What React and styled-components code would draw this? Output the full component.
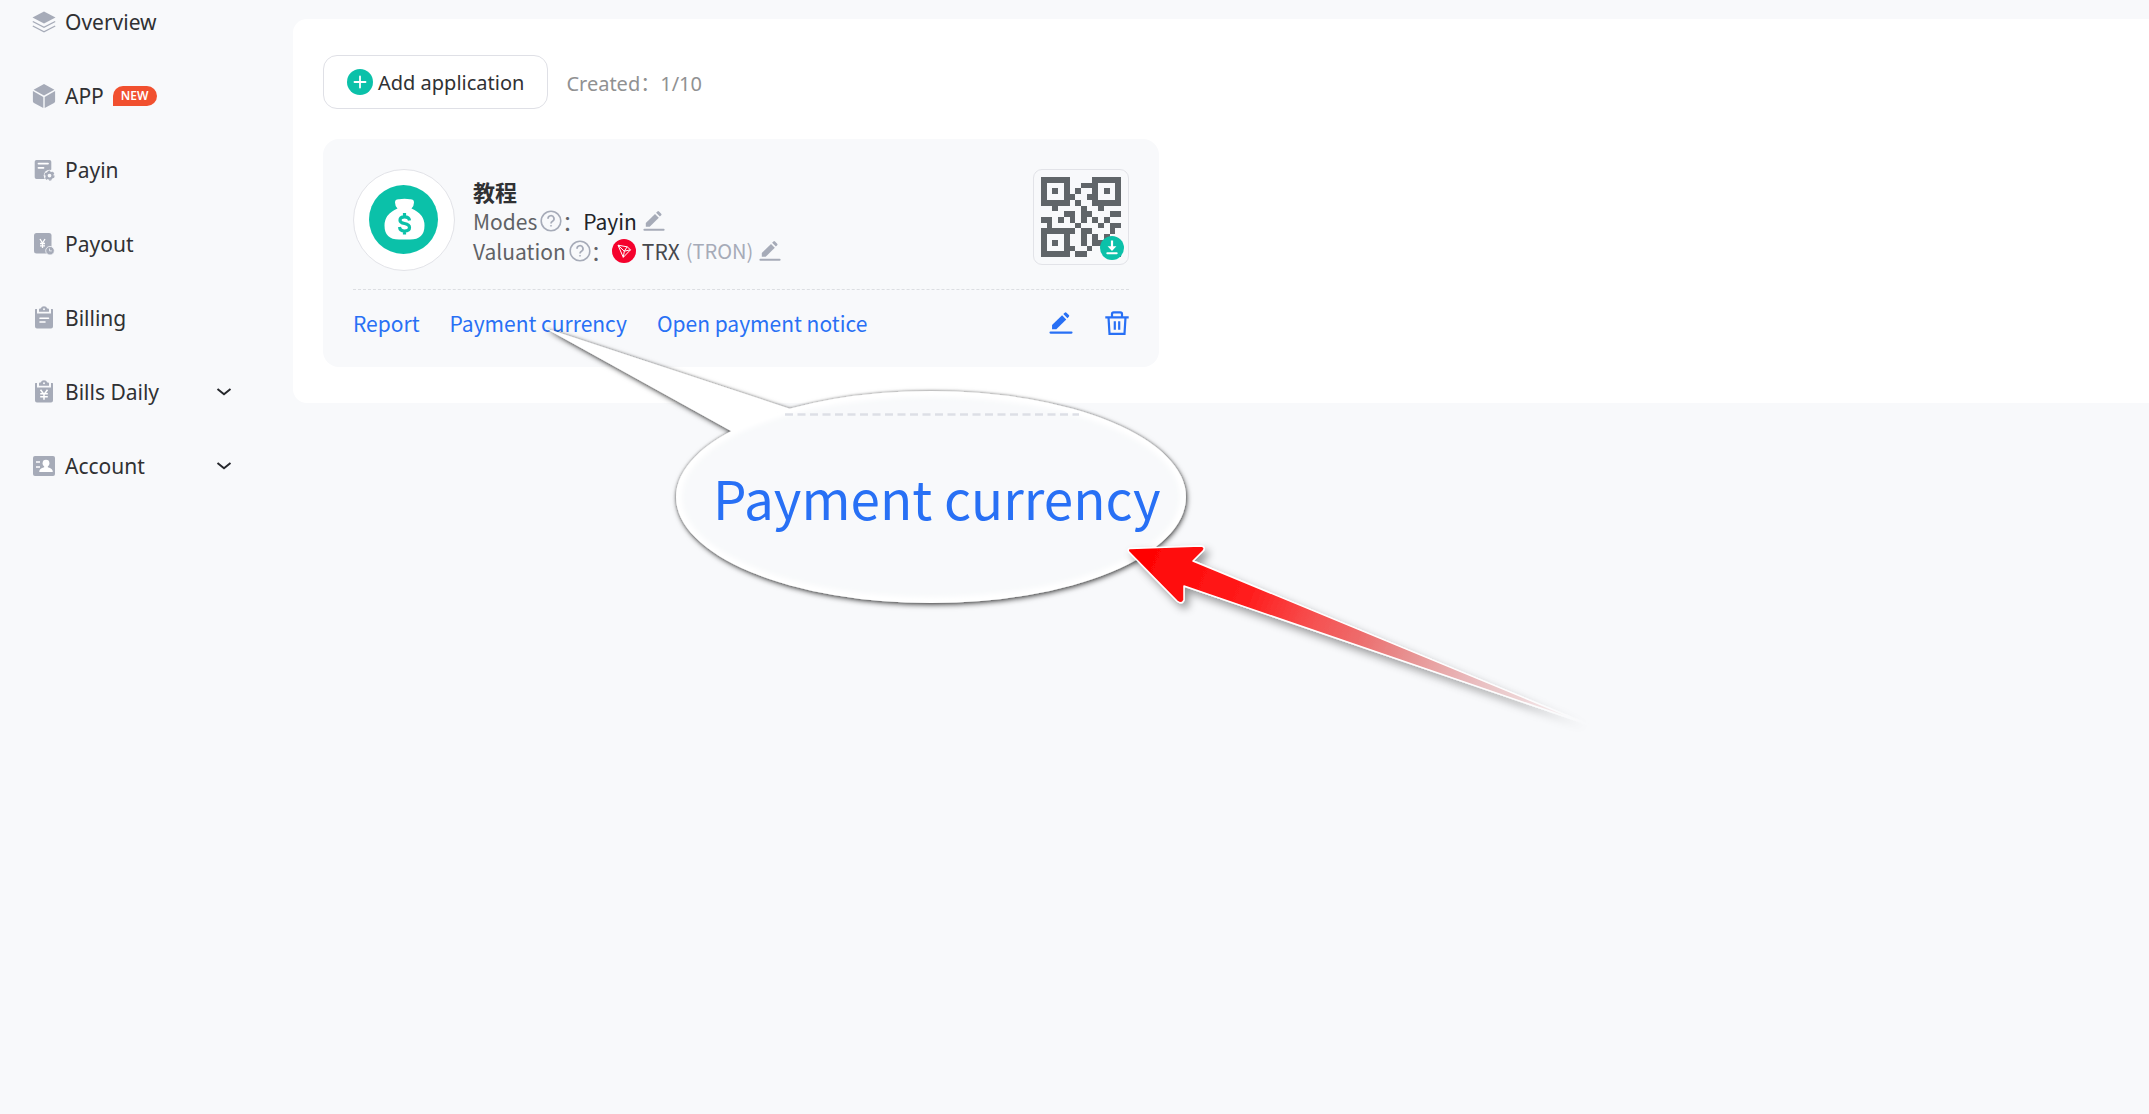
import React from "react";
import styled, { createGlobalStyle } from "styled-components";

const GlobalStyle = createGlobalStyle`
  * {
    box-sizing: border-box;
  }
  body {
    margin: 0;
    background-color: #f8f9fb;
    font-family: "Noto Sans", "Noto Sans CJK SC", sans-serif;
    font-size: 21px;
    color: #303133;
  }
  button {
    font: inherit;
    color: inherit;
    background: none;
    border: 0;
    padding: 0;
    cursor: pointer;
  }
  a {
    color: inherit;
    text-decoration: none;
  }
  svg {
    display: block;
    flex: none;
  }
`;

const LayersIcon = () => (
  <svg width="24" height="24" viewBox="0 0 24 24" fill="#a6abb8">
    <path d="M12 1.5 23.5 7.5 12 13.5.5 7.5z" />
    <path
      d="M.8 11.5 12 17.3l11.2-5.8M.8 16 12 21.8 23.2 16"
      fill="none"
      stroke="#a6abb8"
      strokeWidth="1.4"
    />
  </svg>
);

const CubeIcon = () => (
  <svg width="24" height="24" viewBox="0 0 24 24" fill="#a6abb8">
    <path d="M12 0 22.4 5.8 12 11.6 1.6 5.8z" />
    <path d="M.9 7.1 11.3 12.9V24L2 18.9Q.9 18.3.9 17.2z" />
    <path d="M23.1 7.1 12.7 12.9V24L22 18.9Q23.1 18.3 23.1 17.2z" />
  </svg>
);

const PayinIcon = () => (
  <svg width="24" height="24" viewBox="0 0 24 24">
    <path
      d="M4.5 2h13A1.8 1.8 0 0 1 19.3 3.8V11.5L13.5 16V21H4.5A1.8 1.8 0 0 1 2.7 19.2V3.8A1.8 1.8 0 0 1 4.5 2z"
      fill="#a6abb8"
    />
    <path d="M6.5 5.6h9.5M6.5 9.8h5" stroke="#fff" strokeWidth="1.8" strokeLinecap="round" />
    <circle cx="17.5" cy="17.6" r="5.8" fill="#f8f9fb" />
    <circle cx="17.5" cy="17.6" r="3" fill="none" stroke="#a6abb8" strokeWidth="2.2" />
    <circle
      cx="17.5"
      cy="17.6"
      r="4.4"
      fill="none"
      stroke="#a6abb8"
      strokeWidth="1.4"
      strokeDasharray="2.4 2.208"
    />
  </svg>
);

const PayoutIcon = () => (
  <svg width="24" height="24" viewBox="0 0 24 24">
    <rect x="2" y="1" width="17.5" height="20.5" rx="2.5" fill="#a6abb8" />
    <path
      d="M8 7l2.500 4L13 7M10.500 11v5M8 11.500h5M8 13.800h5"
      fill="none"
      stroke="#fff"
      strokeWidth="1.3"
    />
    <circle cx="18" cy="18.7" r="4.3" fill="#a6abb8" stroke="#f8f9fb" strokeWidth=".8" />
    <path d="M17.5 16.5v2.4h2.3" fill="none" stroke="#e4e7ed" strokeWidth="1" />
  </svg>
);

const ClipboardIcon = ({ yen }) => (
  <svg width="24" height="24" viewBox="0 0 24 24">
    <path
      d="M5 3v4.5h14V3h1.5Q21 3 21 3.8V20.5Q21 22.500 19 22.500H5Q3 22.500 3 20.500V3.800Q3 3 3.500 3z"
      fill="#a6abb8"
    />
    <path
      d="M7 5.8V3.5Q7 2.8 8 2.6H8.7Q9.5.3 12 .3T15.3 2.6H16Q17 2.8 17 3.5V5.8z"
      fill="#a6abb8"
    />
    <circle cx="12" cy="3.2" r="1" fill="#f8f9fb" />
    {yen ? (
      <path
        d="M8.500 9.800 12 14.500l3.500-4.700M12 14.500v5.300M8.200 13.800h7.600M8.200 16.800h7.600"
        fill="none"
        stroke="#fff"
        strokeWidth="1.5"
      />
    ) : (
      <path d="M8 12.2h8.500M8 16h5" stroke="#fff" strokeWidth="1.6" strokeLinecap="round" />
    )}
  </svg>
);

const AccountIcon = () => (
  <svg width="24" height="24" viewBox="0 0 24 24">
    <rect x="1" y="2" width="22" height="20" rx="2" fill="#a6abb8" />
    <path d="M4 8h4M4 13h4" stroke="#fff" strokeWidth="1.5" />
    <circle cx="14" cy="9.2" r="3.4" fill="#fff" />
    <path d="M12.2 11h3.6v2.3q5 .9 5 4.7H7.2q0-3.800 5-4.700z" fill="#fff" />
  </svg>
);

const ChevronIcon = () => (
  <svg width="16" height="16" viewBox="0 0 16 16">
    <path d="M1.5 5 8 10.2 14.5 5" fill="none" stroke="#26282c" strokeWidth="2" />
  </svg>
);

const PlusIcon = () => (
  <svg width="26" height="26" viewBox="0 0 26 26">
    <circle cx="13" cy="13" r="13" fill="#0bc1a9" />
    <path d="M13 7.5v11M7.5 13h11" stroke="#fff" strokeWidth="1.8" strokeLinecap="round" />
  </svg>
);

const MoneyBag = () => (
  <svg width="70" height="70" viewBox="0 0 70 70">
    <circle cx="34.5" cy="34.5" r="34.500" fill="#0bc1a9" />
    <path
      d="M28.5 23.5Q26 21 26 17.5Q26 14 30 14.2Q35.5 13.2 41 14.2Q45 14 45 17.5Q45 21 42.5 23.5Q55.5 29 55.5 40.5Q55.5 54.5 41 54.5H30Q15.5 54.5 15.5 40.5Q15.5 29 28.5 23.5z"
      fill="#fff"
    />
    <path
      d="M40.5 35.5Q40 31.8 35.5 31.8Q31 31.8 31 35.2Q31 37.6 35.5 38.5Q40.5 39.5 40.5 42.5Q40.5 46 35.5 46Q31 46 30.5 42M35.5 28v4M35.5 46v3.5"
      fill="none"
      stroke="#0bc1a9"
      strokeWidth="3.2"
    />
  </svg>
);

const HelpIcon = () => (
  <svg width="22" height="22" viewBox="0 0 22 22" fill="none" stroke="#a6abb8">
    <circle cx="11" cy="11" r="9.8" strokeWidth="1.6" />
    <path d="M8 8.8a3 3 0 1 1 4.500 2.500q-1.500.8-1.500 2.200" strokeWidth="1.7" />
    <circle cx="11" cy="15.8" r=".5" strokeWidth="1" />
  </svg>
);

const PenIcon = ({ color = "#a6abb8", size = 22 }) => (
  <svg width={size} height={size} viewBox="0 0 22 22" fill={color}>
    <path d="M2.800 16.800v-3.900L12 3.900l3.800 3.800-9.100 9.100z" />
    <path d="m13.100 2.800 1.300-1.300q.8-.8 1.600 0l2.200 2.200q.8.800 0 1.600l-1.300 1.300z" />
    <rect x=".4" y="18.8" width="21.2" height="2" rx="1" />
  </svg>
);

const TrashIcon = () => (
  <svg width="24" height="24" viewBox="0 0 24 24" fill="none" stroke="#2870f5" strokeWidth="2.2">
    <path d="M.3 6.300h23.400M3.500 6.300 4.500 22.800h15L20.500 6.300" />
    <path d="M7 6.300V3Q7 1.300 8.700 1.300h6.600Q17 1.300 17 3v3.300M9.800 10.200v8.500M14.200 10.200v8.500" />
  </svg>
);

const TronIcon = () => (
  <svg width="24" height="24" viewBox="0 0 24 24">
    <circle cx="12" cy="12" r="12" fill="#f5022d" />
    <path
      d="M6 6.2 15.2 7.8 18.5 10.8 11.3 18.3zM6 6.2 12.3 12.2 15.2 7.8M12.3 12.2 18.5 10.8M12.3 12.2 11.3 18.3"
      fill="none"
      stroke="#fff"
      strokeWidth="1"
      strokeLinejoin="round"
    />
  </svg>
);

const DownloadIcon = () => (
  <svg width="24" height="24" viewBox="0 0 24 24">
    <circle cx="12" cy="12" r="12" fill="#0bc1a9" />
    <path d="M10.9 4.5h2.2v5.7h3.3L12 15 7.6 10.2h3.3z" fill="#fff" />
    <path d="M7.3 17.3h9.4" stroke="#fff" strokeWidth="2" strokeLinecap="round" />
  </svg>
);

const qrRows = [
  "11111....11111",
  "1...1..111...1",
  "1.1.1.1..1.1.1",
  "1...11..11...1",
  "11111.1..11111",
  "..1....1..1...",
  "....11.11...11",
  "11.1.1.1.1.1..",
  ".1....1...1.11",
  "111111.11...1.",
  "1...1..1.1.1..",
  "1.1.1..1.11...",
  "1...11..1.....",
  "11111.11.....1",
];

const QrCode = () => (
  <svg width="80" height="80" viewBox="0 0 14 14" fill="#606569" shapeRendering="crispEdges">
    {qrRows.map((row, y) =>
      row.split("").map((cell, x) => cell === "1" && <rect key={`${x}-${y}`} x={x} y={y} width="1" height="1" />)
    )}
  </svg>
);

const menu = [
  { label: "Overview", icon: <LayersIcon /> },
  { label: "APP", icon: <CubeIcon />, isNew: true },
  { label: "Payin", icon: <PayinIcon /> },
  { label: "Payout", icon: <PayoutIcon /> },
  { label: "Billing", icon: <ClipboardIcon /> },
  { label: "Bills Daily", icon: <ClipboardIcon yen />, children: true },
  { label: "Account", icon: <AccountIcon />, children: true },
];

function App() {
  return (
    <Page>
      <GlobalStyle />
      <Sidebar>
        {menu.map((item) => (
          <MenuItem
            key={item.label}
            as={item.children ? "button" : "a"}
            href={item.children ? undefined : "#"}
          >
            {item.icon}
            <span>{item.label}</span>
            {item.isNew && <NewTag>NEW</NewTag>}
            {item.children && (
              <Arrow>
                <ChevronIcon />
              </Arrow>
            )}
          </MenuItem>
        ))}
      </Sidebar>
      <Main>
        <Panel>
          <Toolbar>
            <AddButton>
              <PlusIcon />
              Add application
            </AddButton>
            <Created>Created：1/10</Created>
          </Toolbar>
          <Card>
            <CardTop>
              <Avatar>
                <MoneyBag />
              </Avatar>
              <Info>
                <Name>教程</Name>
                <InfoRow>
                  <Label>
                    Modes
                    <HelpIcon />：
                  </Label>
                  <Value>
                    Payin
                    <IconButton aria-label="Edit modes">
                      <PenIcon />
                    </IconButton>
                  </Value>
                </InfoRow>
                <InfoRow>
                  <Label>
                    Valuation
                    <HelpIcon />：
                  </Label>
                  <Value>
                    <TronIcon />
                    <Coin>TRX</Coin>
                    <Chain>(TRON)</Chain>
                    <IconButton aria-label="Edit valuation">
                      <PenIcon />
                    </IconButton>
                  </Value>
                </InfoRow>
              </Info>
              <QrBox>
                <QrCode />
                <Download aria-label="Download code">
                  <DownloadIcon />
                </Download>
              </QrBox>
            </CardTop>
            <CardBottom>
              <CardLink href="#">Report</CardLink>
              <CardLink href="#">Payment currency</CardLink>
              <CardLink href="#">Open payment notice</CardLink>
              <Actions>
                <IconButton aria-label="Edit">
                  <PenIcon color="#2870f5" size={24} />
                </IconButton>
                <IconButton aria-label="Delete">
                  <TrashIcon />
                </IconButton>
              </Actions>
            </CardBottom>
          </Card>
        </Panel>
      </Main>
      <Callout>
        <svg width="1100" height="440" viewBox="530 310 1100 440">
          <defs>
            <filter id="bubbleShadow" x="-10%" y="-10%" width="120%" height="120%">
              <feDropShadow dx="0" dy="0" stdDeviation="1.5" floodColor="#000" floodOpacity=".4" />
              <feDropShadow dx="1" dy="2" stdDeviation="2.5" floodColor="#000" floodOpacity=".6" />
            </filter>
            <filter id="arrowShadow" x="-10%" y="-10%" width="120%" height="130%">
              <feDropShadow dx="4" dy="5" stdDeviation="4" floodColor="#000" floodOpacity=".4" />
            </filter>
            <filter id="soften">
              <feGaussianBlur stdDeviation="2" />
            </filter>
            <linearGradient
              id="arrowFill"
              gradientUnits="userSpaceOnUse"
              x1="1128"
              y1="549"
              x2="1590"
              y2="725"
            >
              <stop offset="0" stopColor="#ff0000" />
              <stop offset=".26" stopColor="#ff1c1c" />
              <stop offset=".4" stopColor="#f65050" />
              <stop offset=".6" stopColor="#e58686" />
              <stop offset=".8" stopColor="#e6bcbe" />
              <stop offset="1" stopColor="#f5dfe2" />
            </linearGradient>
            <linearGradient
              id="fade"
              gradientUnits="userSpaceOnUse"
              x1="1128"
              y1="549"
              x2="1590"
              y2="725"
            >
              <stop offset=".5" stopColor="#fff" />
              <stop offset=".85" stopColor="#fff" stopOpacity=".75" />
              <stop offset="1" stopColor="#fff" stopOpacity="0" />
            </linearGradient>
            <mask id="arrowMask" maskUnits="userSpaceOnUse" x="1100" y="520" width="530" height="230">
              <rect x="1100" y="520" width="530" height="230" fill="url(#fade)" />
            </mask>
            <clipPath id="bubbleClip">
              <ellipse cx="931" cy="497" rx="255" ry="106" />
            </clipPath>
          </defs>
          <g filter="url(#bubbleShadow)">
            <path d="M545 328 789 408.500 860 450 780 480 731 431z" fill="#fff" />
            <ellipse cx="931" cy="497" rx="255" ry="106" fill="#fff" />
          </g>
          <g clipPath="url(#bubbleClip)">
            <ellipse cx="931" cy="497" rx="249" ry="100" fill="#f8f9fb" filter="url(#soften)" />
            <path d="M785 414.500h294" stroke="#dddfe6" strokeWidth="2.5" strokeDasharray="8 4.5" />
          </g>
          <g mask="url(#arrowMask)">
            <path
              d="M1130 548.500 1201 546Q1206 547 1203 551L1193 561 1590 725 1184 586V600Q1182 605 1177 601L1129 552Q1127 549 1130 548.500z"
              fill="url(#arrowFill)"
              stroke="#fff"
              strokeWidth="1.5"
              strokeLinejoin="round"
              filter="url(#arrowShadow)"
            />
          </g>
        </svg>
        <CalloutText>Payment currency</CalloutText>
      </Callout>
    </Page>
  );
}

const Page = styled.div`
  position: relative;
  display: flex;
  min-height: 100vh;
  overflow: hidden;
`;

const Sidebar = styled.nav`
  display: flex;
  flex-direction: column;
  gap: 30px;
  width: 293px;
  flex: none;
  padding: 0 61px 0 32px;
`;

const MenuItem = styled.a`
  display: flex;
  align-items: center;
  gap: 9px;
  height: 44px;
  text-align: left;
`;

const NewTag = styled.span`
  height: 20px;
  padding: 0 8px;
  border-radius: 10px 10px 10px 0;
  background-color: #f1502f;
  color: #fff;
  font-size: 12px;
  font-weight: 600;
  line-height: 20px;
`;

const Arrow = styled.span`
  margin-left: auto;
`;

const Main = styled.main`
  flex: 1;
  min-width: 0;
  padding-top: 19px;
`;

const Panel = styled.section`
  padding: 36px 30px;
  border-radius: 14px 0 0 14px;
  background-color: #fff;
`;

const Toolbar = styled.div`
  display: flex;
  align-items: center;
  gap: 18px;
  margin-bottom: 30px;
`;

const AddButton = styled.button`
  && {
    display: flex;
    align-items: center;
    gap: 5px;
    height: 54px;
    padding: 0 23px;
    border: 1px solid #dfe0e6;
    border-radius: 14px;
    font-size: 20px;
  }
`;

const Created = styled.span`
  color: #909192;
  font-size: 20px;
`;

const Card = styled.article`
  width: 100%;
  max-width: 836px;
  padding: 30px 30px 28px;
  border-radius: 16px;
  background-color: #f8f9fb;
  font-family: "Noto Sans CJK SC", sans-serif;
`;

const CardTop = styled.div`
  display: flex;
  align-items: flex-start;
  padding-bottom: 18px;
  border-bottom: 1px dashed #dcdee2;
`;

const Avatar = styled.div`
  display: flex;
  align-items: center;
  justify-content: center;
  width: 102px;
  height: 102px;
  margin-right: 18px;
  border: 1px solid #e2e3e8;
  border-radius: 50%;
  background-color: #fff;
`;

const Info = styled.div`
  flex: 1;
  padding-top: 7px;
`;

const Name = styled.h3`
  margin: 0;
  font-size: 22px;
  font-weight: 700;
  line-height: 30px;
`;

const InfoRow = styled.div`
  display: flex;
  align-items: center;
  height: 30px;
  line-height: 30px;
`;

const Label = styled.span`
  display: flex;
  align-items: center;
  color: #606266;
  svg {
    margin-left: 3px;
  }
`;

const Value = styled.span`
  display: flex;
  align-items: center;
  gap: 6px;
  color: #222428;
`;

const Coin = styled.span`
  color: #46484d;
`;

const Chain = styled.span`
  color: #a6abb8;
  font-size: 20px;
`;

const IconButton = styled.button`
  display: flex;
`;

const QrBox = styled.div`
  position: relative;
  display: flex;
  align-items: center;
  justify-content: center;
  width: 96px;
  height: 96px;
  border: 1px solid #e2e3e8;
  border-radius: 9px;
`;

const Download = styled.button`
  position: absolute;
  right: 4px;
  bottom: 4px;
`;

const CardBottom = styled.div`
  display: flex;
  align-items: center;
  gap: 30px;
  height: 32px;
  margin-top: 17px;
`;

const CardLink = styled.a`
  color: #2870f5;
`;

const Actions = styled.div`
  display: flex;
  align-items: center;
  gap: 32px;
  margin-left: auto;
`;

// sits over the page and points at the payment currency link
const Callout = styled.div`
  position: absolute;
  top: 310px;
  left: 530px;
  pointer-events: none;
`;

const CalloutText = styled.span`
  position: absolute;
  top: 147px;
  left: 183px;
  color: #2870f5;
  font-family: "Noto Sans CJK SC", sans-serif;
  font-size: 53px;
  line-height: 80px;
  white-space: nowrap;
`;

export default App;
